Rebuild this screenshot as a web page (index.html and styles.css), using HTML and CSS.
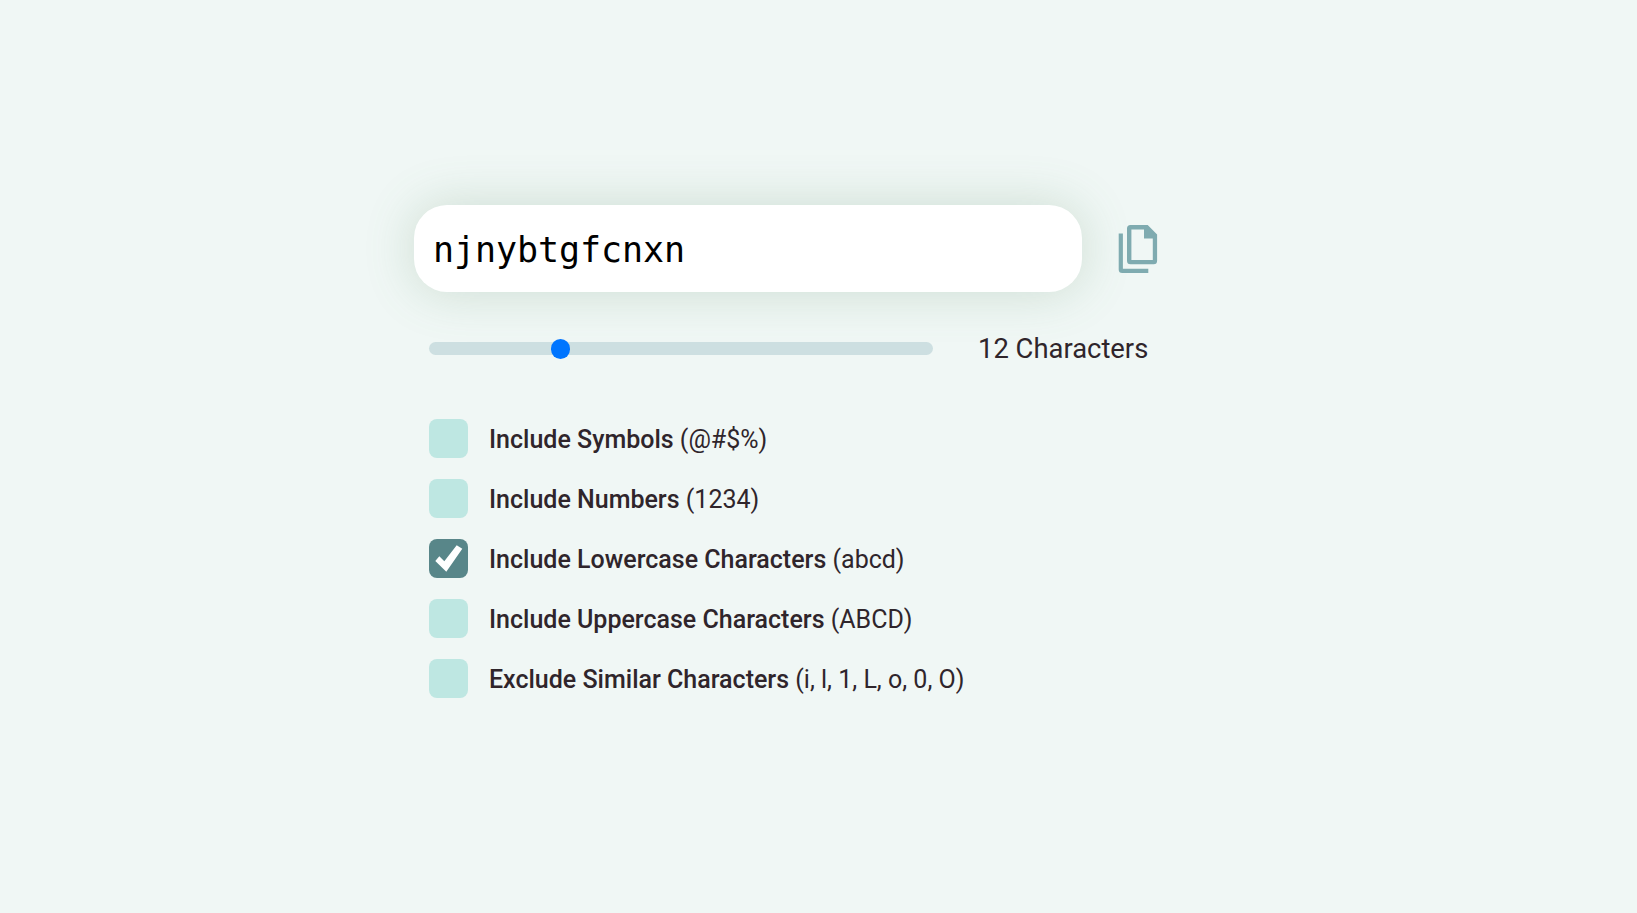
FILE: index.html
```
<!DOCTYPE html>
<html lang="en">
<head>
<meta charset="utf-8">
<title>Password Generator</title>
<link rel="stylesheet" href="styles.css">
</head>
<body>
<main class="generator">
  <div class="result">
    <div class="password">njnybtgfcnxn</div>
    <svg class="copy" viewBox="0 0 40 50" width="40" height="50" role="img" aria-label="Copy">
      <path d="M.7 9.5h4.2v35.3h25.4v4.3H4.2a3.5 3.5 0 0 1-3.5-3.5z"/>
      <path fill-rule="evenodd" d="M12.5 1h17.2l9.4 9.4v26.4a3.5 3.5 0 0 1-3.5 3.5H12.5A3.5 3.5 0 0 1 9 36.8V4.5A3.5 3.5 0 0 1 12.5 1zm.9 4.4v30.7h21.4V14.5H26V5.4z"/>
    </svg>
  </div>
  <div class="length">
    <div class="track"><div class="thumb"></div></div>
    <span class="count">12 Characters</span>
  </div>
  <div class="options">
    <div class="option"><span class="box"></span><span class="label"><b class="name">Include Symbols</b> (@#$%)</span></div>
    <div class="option"><span class="box"></span><span class="label"><b class="name">Include Numbers</b> (1234)</span></div>
    <div class="option"><span class="box checked"><svg class="tick" viewBox="0 0 39 39" width="39" height="39"><path d="M6.3 22l4-4.7 5 5L27.7 6.3l5.6 3.4-16 23z"/></svg></span><span class="label"><b class="name">Include Lowercase Characters</b> (abcd)</span></div>
    <div class="option"><span class="box"></span><span class="label"><b class="name">Include Uppercase Characters</b> (ABCD)</span></div>
    <div class="option"><span class="box"></span><span class="label"><b class="name">Exclude Similar Characters</b> (i, l, 1, L, o, 0, O)</span></div>
  </div>
</main>
</body>
</html>
```
FILE: styles.css
```
body {
  margin: 0;
  min-height: 100vh;
  background: #f0f7f5;
  color: #2f252b;
  font-family: Roboto, sans-serif;
}
.generator {
  width: 760px;
  padding: 205px 0 0 414px;
}
.result {
  display: flex;
  align-items: center;
  gap: 36px;
}
.password {
  box-sizing: border-box;
  width: 668px;
  height: 87px;
  padding-left: 19px;
  border-radius: 33px;
  background: #fff;
  box-shadow: 0 0 50px rgba(88, 140, 95, .23);
  color: #000;
  font: 35px/91px "DejaVu Sans Mono", monospace;
  letter-spacing: -.07px;
}
.copy { fill: #7fabb0; }
.length {
  display: flex;
  align-items: center;
  height: 39px;
  margin-top: 37px;
  padding-left: 15px;
}
.track {
  display: flex;
  align-items: center;
  box-sizing: border-box;
  width: 504px;
  height: 13px;
  padding-left: 121.5px;
  border-radius: 7px;
  background: #cddfe1;
}
.thumb {
  width: 19.5px;
  height: 19.5px;
  margin-top: 1px;
  border-radius: 50%;
  background: #0075ff;
}
.count {
  margin-left: 45px;
  font-size: 27.4px;
  line-height: 40px;
  white-space: nowrap;
}
.options {
  display: flex;
  flex-direction: column;
  gap: 21px;
  padding: 51px 0 0 15px;
}
.option {
  display: flex;
  gap: 21px;
  height: 39px;
}
.box {
  width: 39px;
  height: 39px;
  border-radius: 8px;
  background: #bee7e2;
}
.checked { background: #588689; }
.tick {
  display: block;
  fill: #fff;
}
.label {
  font-size: 25px;
  font-weight: 400;
  line-height: 41px;
  white-space: nowrap;
}
.name { font-weight: 500; }
```
